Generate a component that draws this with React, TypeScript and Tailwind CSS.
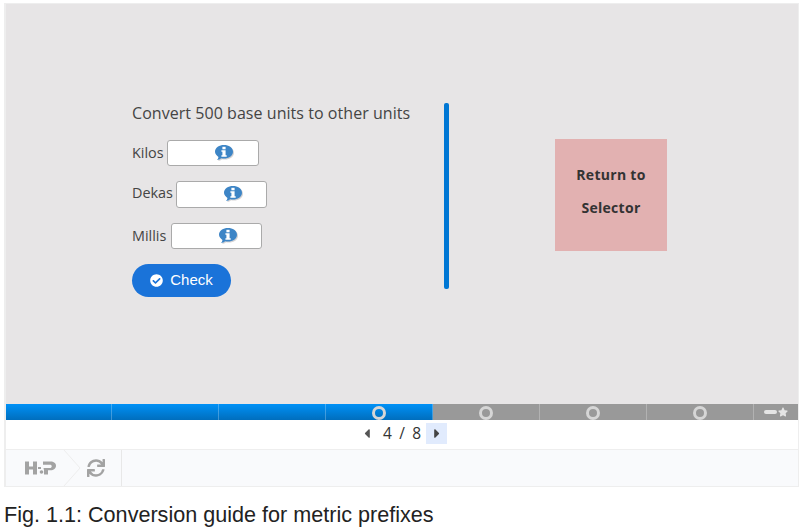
import React from 'react'
import { FaCaretLeft, FaCaretRight, FaCheckCircle, FaStar, FaSync } from 'react-icons/fa'

const fields = [
    { label: 'Kilos', inputClass: 'w-[92px]', rowClass: 'h-[26px] mb-[15px] gap-[3px]', labelClass: 'pb-0' },
    { label: 'Dekas', inputClass: 'w-[91px]', rowClass: 'h-[27px] mb-[15px] gap-[3px]', labelClass: 'pb-[3px]' },
    { label: 'Millis', inputClass: 'w-[91px]', rowClass: 'h-[26px] mb-[15px] gap-[5px]', labelClass: 'pb-[1px]' },
]

function InfoBubble() {
    return (
        <svg width="20" height="17" viewBox="0 0 20 17" className="absolute left-[47px] top-[4px]">
            <path d="M10 1c4.700 0 9 2.700 9 6.800s-4.300 6.800-9 6.800c-1 0-2-.1-3-.4-1 1-2.500 1.600-4 1.800.8-.8 1.300-1.800 1.500-3C2.500 11.600 1 9.900 1 7.800 1 3.700 5.300 1 10 1z" fill="#d5d3d4" />
            <path d="M9 0c4.700 0 9 2.700 9 6.800s-4.300 6.800-9 6.800c-1 0-2-.1-3-.4-1 1-2.500 1.600-4 1.800.8-.8 1.300-1.800 1.500-3C1.500 10.600 0 8.900 0 6.800 0 2.700 4.300 0 9 0z" fill="#3d85c6" />
            <rect x="7.400" y="1.800" width="3.200" height="2.500" fill="#fff" />
            <path d="M6.400 5.200h4.200v5h1.100v1.500H6.400v-1.500h1v-3.500h-1z" fill="#fff" />
        </svg>
    )
}

function H5PLogo() {
    return (
        <svg width="31" height="14" viewBox="0 0 31 14">
            <g fill="#a3a3a3">
                <rect x="0" y="0.500" width="4" height="13" />
                <rect x="8" y="0.500" width="4" height="13" />
                <rect x="3" y="5.500" width="6" height="3" />
                <rect x="13" y="6" width="3" height="2" />
                <circle cx="16.500" cy="11" r="1.800" />
                <path d="M18 .5h7.500c3.300 0 5.500 1.600 5.500 4.300s-2.200 4.500-5.500 4.500H23v4.200h-4V9.500l-.5-2.500H25c1 0 1.700-.8 1.700-1.800S26 3.700 25 3.700h-7z" />
            </g>
        </svg>
    )
}

function Segment({ widthClass, filled, dot }: { widthClass: string; filled: boolean; dot?: boolean }) {
    return (
        <div className={`${widthClass} relative h-full flex items-center justify-center border-r border-r-[#ffffff40] ${filled ? 'bg-gradient-to-b from-[#0091f7] to-[#006ebd]' : 'bg-[#999999]'}`}>
            {dot && <div className="mt-[2px] w-[14px] h-[14px] rounded-full border-[3px] border-[#d6d6d6]" />}
        </div>
    )
}

export default function App() {
    return (
        <div className="w-[806px] h-[531px] bg-white pt-[3px] pl-[4px] font-['Open_Sans',sans-serif] overflow-hidden">
            <div className="w-[795px] h-[484px] border-2 border-t-[1px] border-r-[1px] border-[#eeeeee] flex flex-col">
                {/* Slide */}
                <div className="h-[400px] shrink-0 bg-[#e7e5e6] flex text-[#444444]">
                    <div className="w-[438px] shrink-0 pl-[126px] pt-[98px]">
                        <div className="text-[16px] leading-[22px] mb-[16px] tracking-[0.05px] whitespace-nowrap">Convert 500 base units to other units</div>
                        {fields.map((field) => (
                            <div key={field.label} className={`flex items-center ${field.rowClass}`}>
                                <span className={`text-[14.400px] ${field.labelClass}`}>{field.label}</span>
                                <div className={`relative h-full bg-white border border-[#aaaaaa] rounded-[3px] ${field.inputClass}`}>
                                    <InfoBubble />
                                </div>
                            </div>
                        ))}
                        <div className="w-[99px] h-[33px] rounded-full bg-[#1a73d9] text-white text-[15px] font-['Liberation_Sans',sans-serif] flex items-center justify-center gap-[7px]">
                            <FaCheckCircle className="w-[13px] h-[13px]" />
                            <span>Check</span>
                        </div>
                    </div>
                    <div className="w-[5px] h-[186px] mt-[99px] bg-[#0077d4] rounded-[2px] shrink-0" />
                    <div className="ml-[106px] mt-[135px] w-[112px] h-[112px] pb-[8px] bg-[#e2b1b1] flex flex-col items-center justify-center text-[#333333] font-bold text-[14px] leading-[33px] tracking-[0.3px]">
                        <div>Return to</div>
                        <div>Selector</div>
                    </div>
                </div>

                {/* Progress bar */}
                <div className="h-[16px] shrink-0 flex">
                    <Segment widthClass="w-[106px]" filled />
                    <Segment widthClass="w-[107px]" filled />
                    <Segment widthClass="w-[107px]" filled />
                    <Segment widthClass="w-[107px]" filled dot />
                    <Segment widthClass="w-[107px]" filled={false} dot />
                    <Segment widthClass="w-[107px]" filled={false} dot />
                    <Segment widthClass="w-[107px]" filled={false} dot />
                    <div className="flex-1 bg-[#999999] flex items-center justify-center gap-[1px] pr-[1px] text-[#e5e5e5]">
                        <div className="w-[13px] h-[4px] rounded-full bg-[#e5e5e5]" />
                        <FaStar className="w-[10px] h-[10px]" />
                    </div>
                </div>

                {/* Slide navigation */}
                <div className="h-[29px] shrink-0 bg-white flex items-center pb-[2px] pl-[358px] text-[#333333] text-[15.500px]">
                    <FaCaretLeft className="w-[6px] h-[15px] text-[#555555]" />
                    <span className="ml-[13px] w-[38px] flex justify-between">
                        <span>4</span><span>/</span><span>8</span>
                    </span>
                    <div className="ml-[5px] w-[21px] h-[21px] bg-[#e1ebfd] flex items-center justify-center">
                        <FaCaretRight className="w-[6px] h-[15px] text-[#444444]" />
                    </div>
                </div>

                {/* Footer */}
                <div className="flex-1 bg-[#f9fafc] border-t border-[#eeeeee] flex items-center">
                    <div className="pl-[19px] w-[57px] shrink-0"><H5PLogo /></div>
                    <svg width="18" height="36" viewBox="0 0 18 36" className="shrink-0">
                        <path d="M1 0l16 18L1 36" fill="none" stroke="#eeeeee" strokeWidth="1" />
                    </svg>
                    <div className="w-[41px] h-full shrink-0 border-r border-[#e8e8e8] flex items-center pl-[6px]">
                        <FaSync className="w-[18px] h-[18px] text-[#a3a3a3]" />
                    </div>
                </div>
            </div>
            <div className="font-['Liberation_Sans',sans-serif] text-[21.600px] leading-[24px] text-[#222222] mt-[16px] whitespace-nowrap">Fig. 1.1: Conversion guide for metric prefixes</div>
        </div>
    )
}
